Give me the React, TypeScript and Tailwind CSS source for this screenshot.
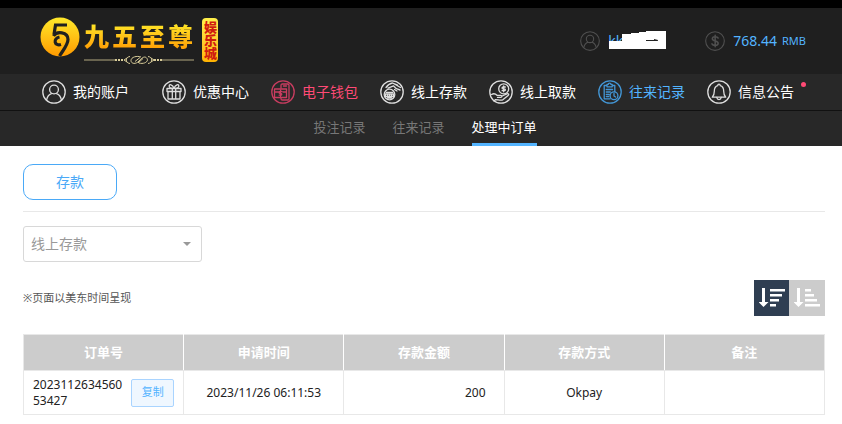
import { useState, type ReactNode } from "react";
import clsx from "clsx";

const CircleIcon = ({ children, className }: { children: ReactNode; className?: string }) => (
  <svg
    viewBox="0 0 24 24"
    fill="none"
    stroke="currentColor"
    strokeWidth="1.3"
    strokeLinecap="round"
    strokeLinejoin="round"
    aria-hidden="true"
    className={clsx("shrink-0", className ?? "size-6")}
  >
    <circle cx="12" cy="12" r="11.2" />
    {children}
  </svg>
);

const userPaths = (
  <>
    <circle cx="12" cy="9.5" r="4.4" />
    <path d="M4.6 19.8c.8-3.6 2.5-5.4 4.8-6.2M19.4 19.8c-.8-3.6-2.5-5.4-4.8-6.2" />
  </>
);

const navItems = [
  { label: "我的账户", icon: userPaths },
  {
    label: "优惠中心",
    icon: (
      <>
        <path d="M5 8.5h14v3H5zM6 11.500v7.500h12v-7.500M10.300 8.500V19M13.700 8.500V19" />
        <path d="M12 8.300C10.500 4.500 7 3.600 7.200 6.200c.1 1.600 2.500 2.100 4.800 2.100ZM12 8.300c1.500-3.800 5-4.700 4.800-2.100-.1 1.600-2.500 2.100-4.800 2.100Z" />
      </>
    ),
  },
  {
    label: "电子钱包",
    tone: "text-[#ff4a75]",
    iconTone: "text-[#c93d60]",
    icon: (
      <>
        <path d="M10 8V5.200c0-.7.5-1.200 1.200-1.200h5.600c.7 0 1.200.5 1.200 1.200v13.600c0 .7-.5 1.200-1.200 1.200h-5.600c-.7 0-1.200-.5-1.200-1.200V18M12.500 6h3" />
        <path d="M3.500 9h12v8.500h-12zM3.500 12h4M12 12h3.500M10.800 11.500H9c-1.200 0-1.200 1.800 0 1.800h.8c1.300 0 1.300 1.900 0 1.900H8.200M9.500 10.500v5.700" />
      </>
    ),
  },
  {
    label: "线上存款",
    icon: (
      <>
        <circle cx="9.5" cy="14.5" r="5.300" />
        <path d="M6.200 12.300h6.600M5.500 14h8v2.500h-8zM7.500 18h4M7.700 14.200v2M9.600 14.200v2M11.500 14.200v2" />
        <path d="M6 7.500c2-2.700 4-4.200 6.500-4.500l5 2.200M8 8.200l5.500-2.400c1.600 2.500 3.500 3.500 6.500 4.200M14 3.800l6.500 3.700M14.500 9.500l2.500 1.500" />
      </>
    ),
  },
  {
    label: "线上取款",
    icon: (
      <>
        <circle cx="14.700" cy="8.800" r="5" />
        <path d="M16.300 7h-2.200c-1.400 0-1.400 1.800 0 1.800h1.200c1.500 0 1.500 1.900 0 1.900h-2.200M14.700 5.900v5.900" />
        <path d="M2.500 14.500c2.500-1.500 4-.8 5.500.8h3.700c1.700 0 1.600 2.100 0 2.100H8.500M13.200 16l4.700-2.200c1.600-.6 2.400.8 1.200 1.700l-5.300 4.300c-2.400 1-4.800-.2-7.300-.2L5 21" />
      </>
    ),
  },
  {
    label: "往来记录",
    tone: "text-[#53b4ff]",
    iconTone: "text-[#4396d5]",
    icon: (
      <>
        <path d="M9 5.500H6.200v13.300h6M14.200 5.500h2.600v6M9 4.300h1.200c.2-1.600 2.600-1.600 2.800 0h1.200v2.500H9zM8.300 9.500h6.300M8.300 12h4M8.300 14.500h3M8.300 16.600h2.500" />
        <circle cx="16" cy="15.800" r="3.900" />
        <path d="M16 13.500v2.500l1.600 1" />
      </>
    ),
  },
  {
    label: "信息公告",
    dot: true,
    icon: (
      <>
        <path d="M5.300 17.200c1.500-1.600 2-3 2-6 0-3 1.300-5 3.500-5.600 0-2 2.400-2 2.400 0 2.200.6 3.500 2.600 3.500 5.600 0 3 .5 4.400 2 6z" />
        <path d="M9.800 17.500c.4 2.700 4 2.700 4.400 0" />
      </>
    ),
  },
];

const tabs = ["投注记录", "往来记录", "处理中订单"];

const columns = ["订单号", "申请时间", "存款金额", "存款方式", "备注"];

const orders = [
  { id: "202311263456053427", time: "2023/11/26 06:11:53", amount: 200, method: "Okpay", remark: "" },
];

const Logo = () => (
  <a href="#" className="flex items-start gap-1 select-none">
    <svg viewBox="0 0 40 40" className="size-10 shrink-0" aria-hidden="true">
      <defs>
        <linearGradient id="gold" x1="0" y1="0" x2="0" y2="1">
          <stop offset="0" stopColor="#ffe92a" />
          <stop offset="1" stopColor="#ff9a00" />
        </linearGradient>
      </defs>
      <circle cx="20" cy="20" r="19.500" fill="url(#gold)" />
      <path
        d="M27 8H15.500L14 17.500M13.500 19c3-5 14.500-4.500 14.500 3.500 0 5-4 9.500-8.500 16.500M21 27.500c-6.500 2-8.500-6-1.500-7.500"
        fill="none"
        stroke="#202020"
        strokeWidth="3.200"
      />
    </svg>
    <div className="pt-1">
      <div className="flex gap-[3px] text-[25px] leading-[30px] font-black">
        {["九", "五", "至", "尊"].map((char) => (
          <span key={char} className="bg-linear-to-b from-[#ffee2a] to-[#ff9800] bg-clip-text text-transparent">
            {char}
          </span>
        ))}
      </div>
      <svg
        viewBox="0 0 110 10"
        className="mt-1 h-[10px] w-[110px]"
        fill="none"
        stroke="#d9cd9a"
        aria-hidden="true"
      >
        <path d="M0 5h32M78 5h32" strokeWidth=".8" />
        <path d="M31 5h9M70 5h9" strokeWidth="2" strokeDasharray="2 1" />
        <path d="M46 1.500c-5 .5-5 6.500 0 7M64 1.500c5 .5 5 6.500 0 7M43 3l-3 2 3 2M67 3l3 2-3 2" />
        <path d="M57 2c-4-1.500-10 0-10 3.500s5 4 8 .5 6-5.500 8-2.500-3 6-8 4.500M51 6.500l5-4M54 8l5-4.500" />
      </svg>
    </div>
    <span className="mt-px ml-1 flex h-11 w-4 items-center justify-center rounded bg-linear-to-b from-[#fff04a] to-[#ffb300] text-[13px] leading-4 font-black text-[#d01c10] [writing-mode:vertical-rl]">
      娱乐城
    </span>
  </a>
);

const Header = () => (
  <header className="flex h-[74px] items-center justify-between border-t-8 border-black bg-[#1f1f1f] pr-9 pl-10">
    <Logo />
    <div className="flex items-center text-sm text-[#53b4ff]">
      <CircleIcon className="size-5 text-[#505050]">{userPaths}</CircleIcon>
      <span className="relative ml-2 w-[97px]">
        kk
        <svg viewBox="0 0 58 18" className="absolute top-0 left-0 h-[18px] w-[58px]" aria-hidden="true">
          <path d="M1 10h13V3h9V2h8V1h7V0h20v18H1z" fill="#fff" />
          <path d="M38 9.500h11M46 8.500l4 1" stroke="#222" />
        </svg>
      </span>
      <CircleIcon className="size-5 text-[#505050]">
        <path
          d="M15.800 8.500c-1-2.200-7-2.500-7 .8 0 3.400 7 2 7 5.400 0 3.400-6.300 3.200-7.500.7M12.200 5v14"
          strokeWidth="1.800"
        />
      </CircleIcon>
      <span className="ml-2">768.44</span>
      <span className="ml-[5px] text-[11px]">RMB</span>
    </div>
  </header>
);

const App = () => {
  const [activeTab, setActiveTab] = useState("处理中订单");
  const [descending, setDescending] = useState(true);

  return (
    <div className="min-h-screen bg-white font-['Noto_Sans','Noto_Sans_CJK_SC',sans-serif] text-[#222]">
      <Header />

      <nav className="flex h-9 items-center justify-center gap-[22px] bg-[#282828] pr-[6px] text-sm">
        {navItems.map((item) => (
          <a
            key={item.label}
            href="#"
            className={clsx("relative flex items-center gap-[7px] whitespace-nowrap first:mr-[11px]", item.tone ?? "text-white")}
          >
            <span className={item.iconTone ?? "text-[#dedede]"}>
              <CircleIcon>{item.icon}</CircleIcon>
            </span>
            {item.label}
            {item.dot && <span className="absolute top-0.5 -right-3 size-[5px] rounded-full bg-[#ff4a75]" />}
          </a>
        ))}
      </nav>

      <div className="flex h-9 justify-center gap-[27px] border-t border-[#111] bg-[#282828] pl-2 text-[13px]">
        {tabs.map((tab) => (
          <button
            key={tab}
            type="button"
            onClick={() => setActiveTab(tab)}
            className={clsx(
              "border-b-[3px] pt-0.5",
              activeTab === tab ? "border-[#53b4ff] text-white" : "border-transparent text-[#777]"
            )}
          >
            {tab}
          </button>
        ))}
      </div>

      <main className="pt-[18px] pr-[17px] pb-2 pl-[23px]">
        <div className="border-b border-[#e8e8e8] pb-[11px]">
          <button
            type="button"
            className="block h-9 w-[94px] rounded-[10px] border border-[#4aa9f7] text-sm text-[#4aa9f7]"
          >
            存款
          </button>
        </div>

        <div className="mt-[14px] grid w-[179px] items-center">
          <select
            aria-label="存款类型"
            className="col-start-1 row-start-1 h-9 w-full appearance-none rounded-[3px] border border-[#d8d8d8] bg-white px-[7px] text-sm text-[#999]"
          >
            <option>线上存款</option>
          </select>
          <svg
            viewBox="0 0 8 4"
            className="pointer-events-none col-start-1 row-start-1 mr-[11px] h-1 w-2 justify-self-end"
            aria-hidden="true"
          >
            <path d="M0 0h8L4 4z" fill="#999" />
          </svg>
        </div>

        <div className="mt-[18px] flex items-center justify-between">
          <p className="text-[11px] text-[#555]">※页面以美东时间呈现</p>
          <div className="flex">
            <button
              type="button"
              aria-label="降序"
              onClick={() => setDescending(true)}
              className={clsx("flex h-9 w-[35px] items-center justify-center", descending ? "bg-[#2f3e52]" : "bg-[#ccc]")}
            >
              <svg viewBox="0 0 26 20" className="h-5 w-[26px]" fill="#fff" aria-hidden="true">
                <path d="M3 0h3v14h3.500l-5 5-5-5H3zM11 1h15v2.500H11zM11 6h12v2.500H11zM11 11h9v2.500h-9zM11 16h6v2.500h-6z" />
              </svg>
            </button>
            <button
              type="button"
              aria-label="升序"
              onClick={() => setDescending(false)}
              className={clsx("flex h-9 w-9 items-center justify-center", descending ? "bg-[#ccc]" : "bg-[#2f3e52]")}
            >
              <svg viewBox="0 0 26 20" className="h-5 w-[26px]" fill="#fff" aria-hidden="true">
                <path d="M3 0h3v14h3.500l-5 5-5-5H3zM11 1h6v2.500h-6zM11 6h9v2.500h-9zM11 11h12v2.500H11zM11 16h15v2.500H11z" />
              </svg>
            </button>
          </div>
        </div>

        <table className="mt-[18px] w-full table-fixed border-collapse border border-[#e8e8e8] text-xs">
          <thead>
            <tr className="h-9 bg-[#ccc] text-[13px] text-white">
              {columns.map((column) => (
                <th key={column} className="border-r border-b border-r-white border-b-[#e8e8e8] font-bold last:border-r-[#e8e8e8]">
                  {column}
                </th>
              ))}
            </tr>
          </thead>
          <tbody>
            {orders.map((order) => (
              <tr key={order.id} className="h-11 text-center [&>td]:border [&>td]:border-[#e8e8e8]">
                <td className="px-[9px]">
                  <div className="flex items-center justify-between gap-2">
                    <span className="w-[90px] text-left leading-4 break-all">{order.id}</span>
                    <button
                      type="button"
                      className="h-7 w-[43px] shrink-0 rounded-[2px] border border-[#a9d4ff] bg-[#eff7ff] text-[11px] text-[#53b4ff]"
                    >
                      复制
                    </button>
                  </div>
                </td>
                <td>{order.time}</td>
                <td className="pr-[18px] text-right">{order.amount}</td>
                <td>{order.method}</td>
                <td>{order.remark}</td>
              </tr>
            ))}
          </tbody>
        </table>
      </main>
    </div>
  );
};

export default App;
